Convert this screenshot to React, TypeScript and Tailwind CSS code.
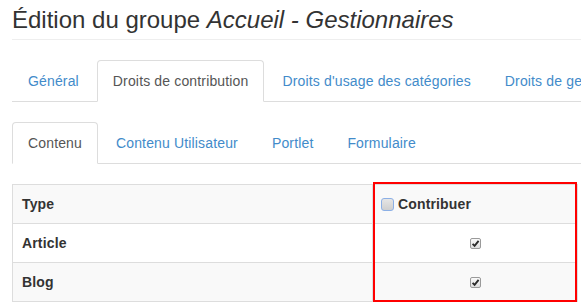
import React from 'react'

const mainTabs = ['Général', 'Droits de contribution', "Droits d'usage des catégories", 'Droits de gestion']
const subTabs = ['Contenu', 'Contenu Utilisateur', 'Portlet', 'Formulaire']

function Tabs({ items, active }: { items: string[]; active: number }) {
  return (
    <ul className="flex flex-nowrap border-b border-[#ddd] ml-3">
      {items.map((label, i) => (
        <li key={label} className="shrink-0 mr-[2px] -mb-px">
          <a
            className={
              i === active
                ? 'block whitespace-nowrap px-[15px] py-[10px] leading-5 rounded-t-[4px] border border-[#ddd] border-b-transparent bg-white text-[#555]'
                : 'block whitespace-nowrap px-[15px] py-[10px] leading-5 rounded-t-[4px] border border-transparent text-[#428bca]'
            }
          >
            {label}
          </a>
        </li>
      ))}
    </ul>
  )
}

function Tick() {
  return (
    <span className="inline-flex items-center justify-center w-[11px] h-[11px] rounded-[2px] border border-[#9a9a9a] bg-gradient-to-b from-[#fafafa] to-[#dedede]">
      <svg width="9" height="9" viewBox="0 0 9 9">
        <path d="M1.6 4.8 L3.6 6.8 L7.6 1.8" fill="none" stroke="#2b2b2b" strokeWidth="1.9" />
      </svg>
    </span>
  )
}

export default function App() {
  const rows = [
    { label: 'Article', bg: 'bg-white' },
    { label: 'Blog', bg: 'bg-[#f9f9f9]' },
  ]

  return (
    <div className="relative w-[581px] h-[304px] overflow-hidden bg-white text-[14px] tracking-[0.15px] text-[#333] font-['Liberation_Sans',Arial,sans-serif]">
      {/* Page header */}
      <div className="pl-3 pt-[7px]">
        <h3 className="text-[24px] leading-[26px] tracking-normal font-normal pb-[6px] border-b border-[#eee] whitespace-nowrap">
          Édition du groupe <em>Accueil - Gestionnaires</em>
        </h3>
      </div>

      <div className="mt-5">
        <Tabs items={mainTabs} active={1} />
      </div>
      <div className="mt-5">
        <Tabs items={subTabs} active={0} />
      </div>

      {/* Rights table */}
      <div className="mt-5 ml-3 w-[566px] border-t border-x border-[#ddd]">
        <div className="flex h-[39px] border-b border-[#ddd] bg-[#f9f9f9] font-bold">
          <div className="w-[359px] pl-[9px] flex items-center">Type</div>
          <div className="flex-1 border-l border-[#ddd] pl-2 flex items-center gap-1">
            <span className="inline-block w-[13px] h-[13px] rounded-[3px] border border-[#8cb0e6] bg-gradient-to-b from-[#e6e6e6] to-[#cfcfcf]" />
            <span>Contribuer</span>
          </div>
        </div>
        {rows.map((r) => (
          <div key={r.label} className={`flex h-[39px] border-b border-[#ddd] font-bold ${r.bg}`}>
            <div className="w-[359px] pl-[9px] flex items-center">{r.label}</div>
            <div className="flex-1 border-l border-[#ddd] flex items-center justify-center">
              <Tick />
            </div>
          </div>
        ))}
      </div>

      {/* Highlight annotation */}
      <div className="absolute left-[373px] top-[182px] w-[204px] h-[120px] border-2 border-[#f00]" />
    </div>
  )
}
